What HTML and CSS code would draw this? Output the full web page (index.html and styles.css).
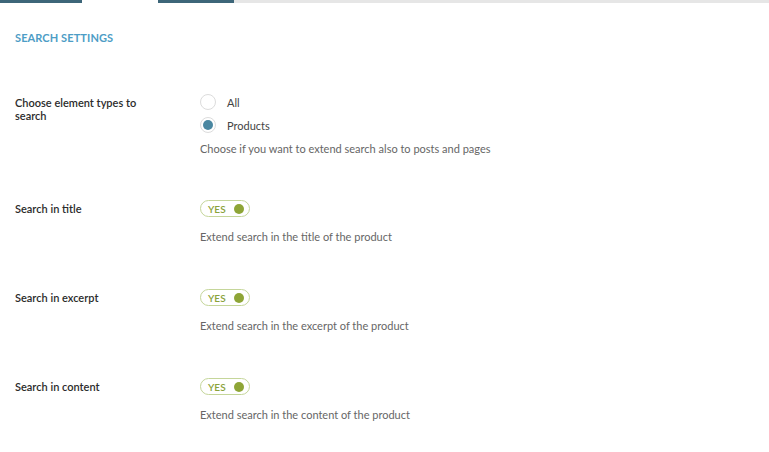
FILE: index.html
```html
<!DOCTYPE html>
<html>
<head>
<meta charset="utf-8">
<link rel="stylesheet" href="styles.css">
</head>
<body>
<div class="tabs">
  <div class="tab tab-on"></div>
  <div class="tab tab-off"></div>
  <div class="tab tab-on"></div>
  <div class="tab-rest"></div>
</div>
<div class="panel">
  <h2 class="title">SEARCH SETTINGS</h2>

  <div class="row row-first">
    <div class="label">Choose element types to search</div>
    <div class="control">
      <label class="radio"><span class="dot"></span><span>All</span></label>
      <label class="radio"><span class="dot dot-on"></span><span>Products</span></label>
      <p class="desc desc-radio">Choose if you want to extend search also to posts and pages</p>
    </div>
  </div>

  <div class="row">
    <div class="label">Search in title</div>
    <div class="control">
      <span class="toggle"><span class="yes">YES</span><span class="knob"></span></span>
      <p class="desc">Extend search in the title of the product</p>
    </div>
  </div>

  <div class="row">
    <div class="label">Search in excerpt</div>
    <div class="control">
      <span class="toggle"><span class="yes">YES</span><span class="knob"></span></span>
      <p class="desc">Extend search in the excerpt of the product</p>
    </div>
  </div>

  <div class="row">
    <div class="label">Search in content</div>
    <div class="control">
      <span class="toggle"><span class="yes">YES</span><span class="knob"></span></span>
      <p class="desc">Extend search in the content of the product</p>
    </div>
  </div>
</div>
</body>
</html>
```
FILE: styles.css
```css
html, body {
  margin: 0;
  padding: 0;
  background: #ffffff;
}
body {
  font-family: "Lato", "Open Sans", sans-serif;
  color: #333333;
}
.tabs {
  display: flex;
  align-items: flex-start;
  height: 3px;
}
.tab {
  width: 82px;
  height: 3px;
}
.tab + .tab {
  width: 76px;
}
.tab-on {
  background: #3d6679;
}
.tab-off {
  background: #ffffff;
}
.tab-rest {
  flex: 1;
  height: 3px;
  background: #e6e6e6;
}
.panel {
  padding: 0 15px;
}
.title {
  margin: 27px 0 0;
  font-size: 11px;
  font-weight: 700;
  color: #4d9dc6;
  line-height: 16px;
  letter-spacing: 0.1px;
}
.row {
  display: flex;
  margin-top: 44px;
}
.row-first {
  margin-top: 48px;
}
.row-first + .row {
  margin-top: 43px;
}
.label {
  width: 140px;
  flex: none;
  margin-right: 45px;
  font-size: 11px;
  font-weight: 600;
  line-height: 13px;
  color: #2b2b2b;
  padding-top: 2px;
}
.control {
  display: flex;
  flex-direction: column;
  align-items: flex-start;
}
.radio {
  display: flex;
  align-items: center;
  gap: 11px;
  height: 16px;
  font-size: 11px;
  color: #444444;
  margin-bottom: 7px;
}
.dot {
  width: 14px;
  height: 14px;
  border: 1px solid #dcdcdc;
  border-radius: 50%;
  box-sizing: content-box;
  position: relative;
  background: #fff;
}
.dot-on::after {
  content: "";
  position: absolute;
  left: 2px;
  top: 2px;
  width: 10px;
  height: 10px;
  border-radius: 50%;
  background: #4a87a1;
}
.desc {
  margin: 0;
  font-size: 11px;
  line-height: 16px;
  color: #666666;
}
.desc-radio {
  margin-top: 1px;
}
.toggle {
  display: flex;
  align-items: center;
  justify-content: space-between;
  box-sizing: border-box;
  width: 50px;
  height: 17px;
  border: 1px solid #c5d69a;
  border-radius: 9px;
  padding: 0 5px 0 7px;
  margin-bottom: 12px;
}
.yes {
  font-size: 10px;
  font-weight: 600;
  color: #8aa23a;
  line-height: 10px;
}
.knob {
  width: 10px;
  height: 10px;
  border-radius: 50%;
  background: #8ea536;
}
```
